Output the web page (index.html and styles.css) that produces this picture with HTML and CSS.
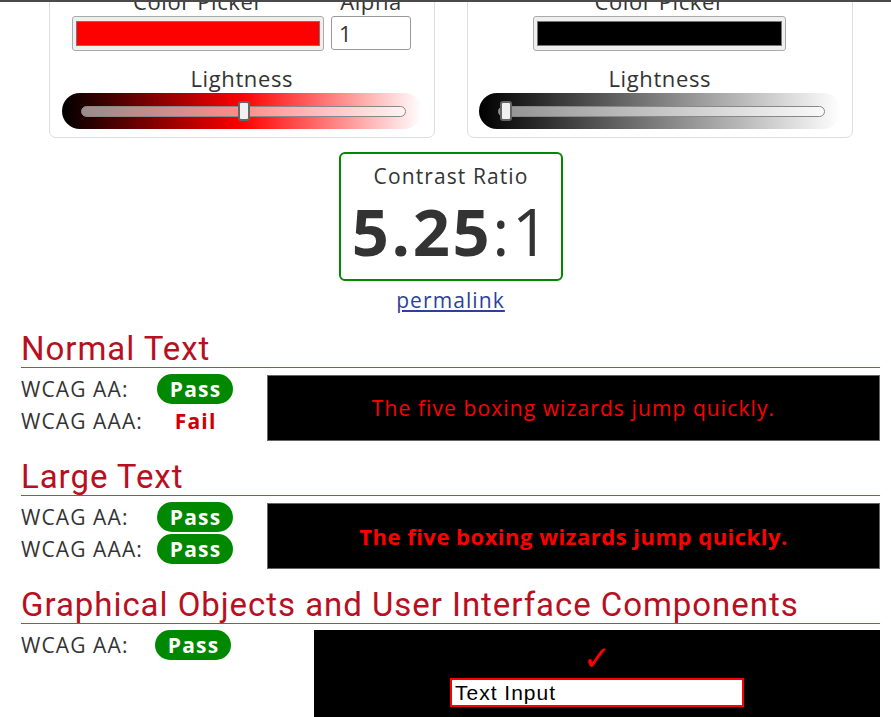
FILE: index.html
```html
<!DOCTYPE html>
<html lang="en">
<head>
<meta charset="utf-8">
<title>Contrast Checker</title>
<link rel="stylesheet" href="styles.css">
</head>
<body>
<div class="topline"></div>
<main class="page">
  <div class="pickers">
    <section class="panel">
      <div class="inputs">
        <div class="field">
          <label class="field-label">Color Picker</label>
          <div class="swatch"><span class="swatch-fill fill-red"></span></div>
        </div>
        <div class="field">
          <label class="field-label">Alpha</label>
          <div class="alpha">1</div>
        </div>
      </div>
      <div class="light-label">Lightness</div>
      <div class="slider slider-red">
        <div class="track"><div class="thumb" style="left:50.3%"></div></div>
      </div>
    </section>
    <section class="panel">
      <div class="inputs">
        <div class="field">
          <label class="field-label">Color Picker</label>
          <div class="swatch swatch-wide"><span class="swatch-fill fill-black"></span></div>
        </div>
      </div>
      <div class="light-label">Lightness</div>
      <div class="slider slider-gray">
        <div class="track"><div class="thumb" style="left:2.3%"></div></div>
      </div>
    </section>
  </div>

  <div class="ratio-box">
    <div class="ratio-title">Contrast Ratio</div>
    <div class="ratio-value"><b>5.25</b>:1</div>
  </div>
  <div class="permalink-row"><a class="permalink" href="#">permalink</a></div>

  <section class="result result-first">
    <h2 class="result-title">Normal Text</h2>
    <div class="result-body">
      <div class="grades">
        <div class="grade"><span class="grade-label">WCAG AA:</span><span class="badge pass">Pass</span></div>
        <div class="grade"><span class="grade-label">WCAG AAA:</span><span class="badge fail">Fail</span></div>
      </div>
      <div class="sample sample-normal">The five boxing wizards jump quickly.</div>
    </div>
  </section>

  <section class="result">
    <h2 class="result-title">Large Text</h2>
    <div class="result-body">
      <div class="grades">
        <div class="grade"><span class="grade-label">WCAG AA:</span><span class="badge pass">Pass</span></div>
        <div class="grade"><span class="grade-label">WCAG AAA:</span><span class="badge pass">Pass</span></div>
      </div>
      <div class="sample sample-large">The five boxing wizards jump quickly.</div>
    </div>
  </section>

  <section class="result">
    <h2 class="result-title">Graphical Objects and User Interface Components</h2>
    <div class="result-body">
      <div class="grades grades-wide">
        <div class="grade"><span class="grade-label label-narrow">WCAG AA:</span><span class="badge pass">Pass</span></div>
      </div>
      <div class="ui-sample">
        <div class="check">&#10003;</div>
        <div class="text-input">Text Input</div>
      </div>
    </div>
  </section>
</main>
</body>
</html>
```

FILE: styles.css
```css
* { box-sizing: border-box; }
html, body { margin: 0; height: 717px; overflow: hidden; }
body {
  font-family: "Open Sans", "DejaVu Sans", sans-serif;
  color: #333;
  background: #fff;
}
.topline {
  position: fixed;
  top: 0; left: 0; right: 0;
  height: 2px;
  background: #4a4a4a;
  z-index: 5;
}
.page {
  padding: 0 11px 0 21px;
  margin-top: -26px;
}
.pickers {
  display: flex;
  justify-content: center;
  gap: 32px;
}
.panel {
  width: 386px;
  border: 1px solid #ddd;
  border-radius: 7px;
  padding: 11px 12px 8px;
  display: flex;
  flex-direction: column;
  align-items: center;
}
.inputs {
  display: flex;
  gap: 7px;
  align-items: flex-end;
}
.field {
  display: flex;
  flex-direction: column;
  align-items: center;
}
.field-label {
  font-size: 22px;
  letter-spacing: 0.6px;
  line-height: 30px;
}
.swatch {
  width: 252px;
  height: 35px;
  border: 1px solid #aaa;
  border-radius: 3px;
  background: #efefef;
  padding: 4px 3px 4px 3px;
  display: flex;
}
.swatch-wide { width: 253px; }
.swatch-fill {
  flex: 1;
  border: 1px solid #777;
}
.fill-red { background: #f00; }
.fill-black { background: #000; }
.alpha {
  width: 80px;
  height: 34px;
  border: 1px solid #999;
  border-radius: 3px;
  font-size: 22px;
  line-height: 32px;
  padding-left: 7px;
  margin-bottom: 1px;
}
.light-label {
  font-size: 22px;
  letter-spacing: 0.6px;
  padding-left: 0.6px;
  line-height: 30px;
  margin-top: 12px;
}
.slider {
  width: 360px;
  height: 36px;
  border-radius: 18px;
  display: flex;
  align-items: center;
  padding: 0 16px 0 19px;
}
.slider-red { background: linear-gradient(to right, #000 0%, #f00 50%, #fff 100%); }
.slider-gray { width: 362px; background: linear-gradient(to right, #000 0%, #fff 100%); }
.track {
  flex: 1;
  height: 11px;
  border-radius: 6px;
  background: rgba(255, 255, 255, 0.55);
  border: 1px solid #888;
  position: relative;
}
.thumb {
  position: absolute;
  top: 50%;
  width: 12px;
  height: 20px;
  margin-top: -10px;
  transform: translateX(-50%);
  background: #f0f0f0;
  border: 2px solid #666;
  border-radius: 3px;
}
.ratio-box {
  width: 224px;
  height: 129px;
  margin: 14px auto 0;
  border: 2px solid #080;
  border-radius: 6px;
  text-align: center;
  padding-top: 9px;
}
.ratio-title {
  font-size: 21px;
  letter-spacing: 1.1px;
  padding-left: 1.1px;
  line-height: 27px;
}
.ratio-value {
  font-size: 65px;
  letter-spacing: 2.6px;
  padding-left: 2.6px;
  line-height: 72px;
  margin-top: 5px;
}
.ratio-value b { font-weight: 700; }
.permalink-row {
  text-align: center;
  margin-top: 6px;
  font-size: 21px;
  letter-spacing: 1.1px;
  line-height: 27px;
}
.permalink { color: #2d3f9f; }
.result { margin-top: 17px; }
.result-first { margin-top: 16px; }
.result-title {
  margin: 0;
  font-family: Roboto, "Liberation Sans", sans-serif;
  font-weight: 400;
  font-size: 33px;
  letter-spacing: 0.95px;
  line-height: 37px;
  color: #b8101f;
  border-bottom: 1px solid #d9363e;
}
.result-body {
  display: flex;
  align-items: flex-start;
  margin-top: 6px;
}
.grades {
  width: 246px;
  flex: none;
  display: flex;
  flex-direction: column;
  gap: 2px;
}
.grades-wide { width: 293px; }
.grade {
  display: flex;
  align-items: center;
  height: 30px;
}
.grade-label {
  width: 136px;
  font-size: 21px;
  letter-spacing: 1.1px;
}
.label-narrow { width: 134px; }
.badge {
  width: 76px;
  height: 30px;
  border-radius: 15px;
  font-weight: 700;
  font-size: 21px;
  letter-spacing: 1.2px;
  padding-left: 1.2px;
  line-height: 30px;
  text-align: center;
}
.pass { background: #080; color: #fff; }
.fail { color: #c00; }
.sample {
  flex: 1;
  height: 66px;
  margin-top: 1px;
  background: #000;
  border: 1px solid #666;
  color: #f00;
  display: flex;
  align-items: center;
  justify-content: center;
}
.sample-normal { font-size: 21px; letter-spacing: 1.1px; }
.sample-large { font-size: 22px; font-weight: 700; letter-spacing: 0.5px; }
.ui-sample {
  flex: 1;
  height: 140px;
  background: #000;
  display: flex;
  flex-direction: column;
  align-items: center;
  padding-top: 11px;
}
.check {
  color: #f00;
  font-family: "DejaVu Sans", sans-serif;
  font-size: 34px;
  line-height: 35px;
}
.text-input {
  margin-top: 2px;
  width: 294px;
  height: 29px;
  background: #fff;
  border: 2px solid #f00;
  font-family: "Liberation Sans", Arial, sans-serif;
  font-size: 21px;
  letter-spacing: 1px;
  line-height: 25px;
  color: #000;
  padding-left: 3px;
}
```
